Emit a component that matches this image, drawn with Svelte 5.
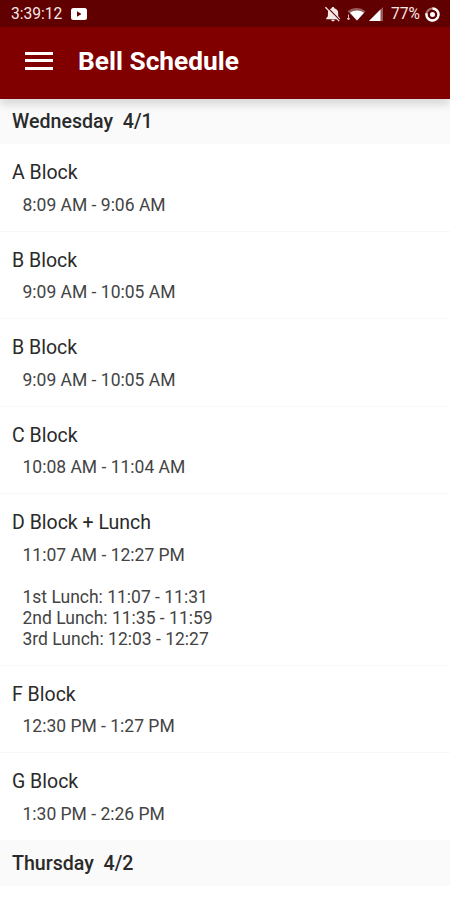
<script lang="ts">
	interface Block {
		name: string;
		time: string;
		lunches?: string[];
	}

	interface Day {
		label: string;
		date: string;
		blocks: Block[];
	}

	const days: Day[] = [
		{
			label: 'Wednesday',
			date: '4/1',
			blocks: [
				{ name: 'A Block', time: '8:09 AM - 9:06 AM' },
				{ name: 'B Block', time: '9:09 AM - 10:05 AM' },
				{ name: 'B Block', time: '9:09 AM - 10:05 AM' },
				{ name: 'C Block', time: '10:08 AM - 11:04 AM' },
				{
					name: 'D Block + Lunch',
					time: '11:07 AM - 12:27 PM',
					lunches: [
						'1st Lunch: 11:07 - 11:31',
						'2nd Lunch: 11:35 - 11:59',
						'3rd Lunch: 12:03 - 12:27'
					]
				},
				{ name: 'F Block', time: '12:30 PM - 1:27 PM' },
				{ name: 'G Block', time: '1:30 PM - 2:26 PM' }
			]
		},
		{ label: 'Thursday', date: '4/2', blocks: [] }
	];
</script>

<div class="screen">
	<div class="status">
		<span class="clock">3:39:12</span>
		<svg class="video" width="16" height="12" viewBox="0 0 16 12">
			<rect width="16" height="12" rx="2.5" fill="#fff" />
			<path d="M6 3.3v5.4L10.5 6z" fill="#600000" />
		</svg>

		<svg class="bell" width="17" height="16" viewBox="0 0 17 16">
			<path
				d="M9 1c.8 0 1.300.5 1.300 1.200 2.500.6 3.900 2.300 3.900 4.700v3.400l1.800 1.900v1H2.200v-1l1.700-1.900V6.900c0-2.400 1.300-4.100 3.800-4.700C7.700 1.500 8.200 1 9 1zM7.300 13.700h3.400c0 .9-.7 1.600-1.700 1.600s-1.700-.7-1.700-1.600z"
				fill="#f5e9e7"
			/>
			<path d="M2.600 .8l13.400 13.600" stroke="#600000" stroke-width="1.300" />
			<path d="M1.400 1.300l13.800 13.800" stroke="#f5e9e7" stroke-width="1.300" />
		</svg>
		<svg class="wifi" width="19" height="14" viewBox="0 0 19 14">
			<path d="M.5 4.300C5.500-.2 13.500-.2 18.500 4.300L10 13.500z" fill="#fff" opacity=".35" />
			<path d="M3 5.800c4.200-3 9.800-3 14 0L10 13.500z" fill="#fff" />
			<path d="M1.500 7.500v5.500M.2 11l1.300 2 1.300-2" stroke="#dcc" stroke-width=".9" fill="none" />
		</svg>
		<svg class="signal" width="14" height="14" viewBox="0 0 14 14">
			<path d="M14 0v14H0z" fill="#fff" opacity=".35" />
			<path d="M11.500 2.500v11.500H0z" fill="#fff" />
		</svg>
		<span class="percent">77%</span>
		<svg class="battery" width="15" height="15" viewBox="0 0 15 15">
			<circle cx="7.500" cy="7.500" r="6" fill="none" stroke="#b07878" stroke-width="2" />
			<path d="M7.500 1.500a6 6 0 1 1-5.900 4.800" fill="none" stroke="#fff" stroke-width="2.400" />
			<circle cx="7.500" cy="7.500" r="2.500" fill="#fff" />
		</svg>
	</div>

	<header>
		<button aria-label="Menu">
			<span></span>
			<span></span>
			<span></span>
		</button>
		<h1>Bell Schedule</h1>
	</header>

	<main>
		{#each days as day}
			<h2>{day.label}&nbsp; {day.date}</h2>
			{#each day.blocks as block}
				<section>
					<h3>{block.name}</h3>
					<p>{block.time}</p>
					{#if block.lunches}
						<div class="lunches">
							{#each block.lunches as lunch}
								<p>{lunch}</p>
							{/each}
						</div>
					{/if}
				</section>
			{/each}
		{/each}
	</main>
</div>

<style>
	:global(body) {
		margin: 0;
		background-color: #fff;
	}

	.screen {
		height: 900px;
		overflow: hidden;
		display: flex;
		flex-direction: column;
		font-family: Roboto, sans-serif;
		color: #2a2a2a;
		background-color: #fff;
	}

	.status {
		flex: none;
		box-sizing: border-box;
		height: 27px;
		padding: 1px 10px 0 11px;
		display: flex;
		align-items: center;
		background-color: #600000;
		color: #f7e8e6;
		font-size: 15.600px;
	}

	.video {
		margin-left: 9px;
	}

	.bell {
		margin-left: auto;
	}

	.wifi {
		margin-left: 6px;
	}

	.signal {
		margin-left: 3px;
	}

	.percent {
		margin-left: 8px;
	}

	.battery {
		margin-left: 5px;
	}

	header {
		flex: none;
		height: 72px;
		display: flex;
		align-items: center;
		background-color: #800000;
		position: relative;
		box-shadow:
			0 6px 10px rgba(0, 0, 0, 0.08),
			0 6px 7px rgba(0, 0, 0, 0.06);
	}

	button {
		width: 28px;
		height: 18px;
		margin: -5px 0 0 25px;
		padding: 0;
		border: 0;
		background: none;
		display: flex;
		flex-direction: column;
		justify-content: space-between;
	}

	button span {
		height: 3px;
		background-color: #fff;
	}

	h1 {
		margin: -5px 0 0 25px;
		font-size: 26.300px;
		line-height: 32px;
		font-weight: 700;
		color: #fff;
	}

	h2 {
		box-sizing: border-box;
		height: 45px;
		margin: 0;
		padding-left: 12px;
		font-size: 19.600px;
		line-height: 46px;
		font-weight: 500;
		background-color: #fafafa;
	}

	section {
		box-sizing: border-box;
		min-height: 87.500px;
		padding: 17px 12px 15.400px;
		border-bottom: 1px solid #f8f8f8;
	}

	h3 {
		margin: 0 0 9.500px;
		font-size: 19.500px;
		line-height: 24px;
		font-weight: 400;
	}

	p {
		margin: 0 0 0 10.500px;
		font-size: 17.500px;
		line-height: 20.600px;
		color: #444;
	}

	.lunches {
		margin-top: 22.400px;
	}
</style>
